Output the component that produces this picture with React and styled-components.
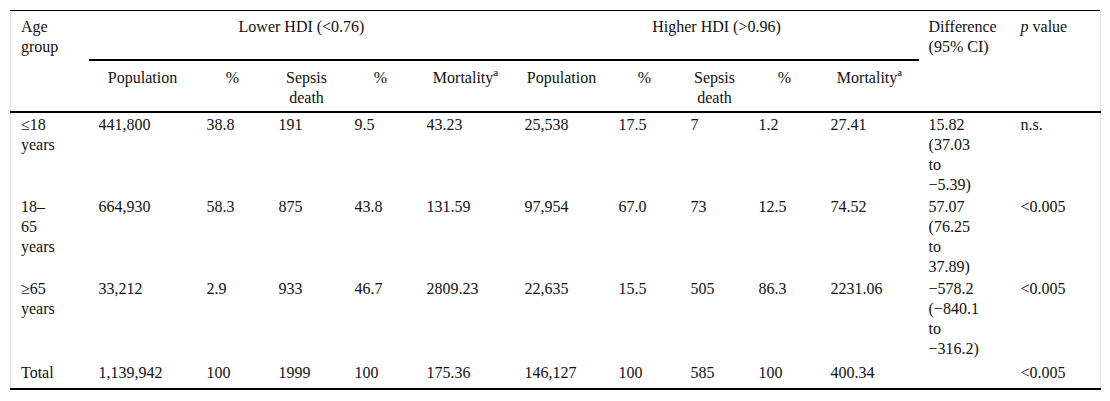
import React from 'react'
import styled, { createGlobalStyle } from 'styled-components'

const GlobalStyle = createGlobalStyle`
    html, body {
        margin: 0;
        padding: 0;
        background: #fff;
    }
    body {
        font-family: "Liberation Serif", "Times New Roman", serif;
        font-size: 16px;
        color: #111;
    }
`

const Page = styled.div`
    padding: 10px;
`

const Table = styled.table`
    width: 1090px;
    table-layout: fixed;
    border-collapse: collapse;
    border-top: 1px solid #000;
    border-bottom: 2px solid #000;
    border-left: 1px solid #e2e2e2;
    border-right: 1px solid #e2e2e2;
    font-family: "Liberation Serif", "Times New Roman", serif;
    font-size: 16px;
    line-height: 20px;
    color: #111;

    thead {
        border-bottom: 2px solid #000;
    }
    tbody tr:last-child td {
        padding-top: 4px;
        padding-bottom: 5px;
    }
`

const HeadRow = styled.tr`
    height: ${p => p.$height}px;
`

const Head = styled.th`
    font-weight: 400;
    vertical-align: top;
    text-align: ${p => p.$align || 'center'};
    padding: ${p => p.$pad || '6px 10px 2px'};
    border-bottom: ${p => (p.$rule ? '2px solid #000' : 'none')};
`

const Cell = styled.td`
    vertical-align: top;
    text-align: left;
    padding: 2px 10px 0;
`

const Sup = styled.sup`
    font-size: 11px;
    line-height: 0;
    vertical-align: 7px;
`

const Italic = styled.i`
    font-style: italic;
`

const widths = [78, 108, 72, 76, 72, 98, 94, 72, 68, 72, 98, 92, 90]

const rows = [
    [['≤18', 'years'], '441,800', '38.8', '191', '9.5', '43.23', '25,538', '17.5', '7', '1.2', '27.41', ['15.82', '(37.03', 'to', '−5.39)'], 'n.s.'],
    [['18–', '65', 'years'], '664,930', '58.3', '875', '43.8', '131.59', '97,954', '67.0', '73', '12.5', '74.52', ['57.07', '(76.25', 'to', '37.89)'], '<0.005'],
    [['≥65', 'years'], '33,212', '2.9', '933', '46.7', '2809.23', '22,635', '15.5', '505', '86.3', '2231.06', ['−578.2', '(−840.1', 'to', '−316.2)'], '<0.005'],
    ['Total', '1,139,942', '100', '1999', '100', '175.36', '146,127', '100', '585', '100', '400.34', '', '<0.005'],
]

function Lines({ value }) {
    if (!Array.isArray(value)) return value
    return value.map((line, i) => (
        <React.Fragment key={i}>
            {i > 0 && <br />}
            {line}
        </React.Fragment>
    ))
}

function GroupColumns() {
    return (
        <>
            <Head $pad="7px 10px 3px">Population</Head>
            <Head $pad="7px 10px 3px">%</Head>
            <Head $pad="7px 10px 3px">Sepsis<br />death</Head>
            <Head $pad="7px 10px 3px">%</Head>
            <Head $pad="7px 10px 3px">Mortality<Sup>a</Sup></Head>
        </>
    )
}

export default function App() {
    return (
        <Page>
            <GlobalStyle />
            <Table>
                <colgroup>
                    {widths.map((w, i) => <col key={i} style={{ width: w }} />)}
                </colgroup>
                <thead>
                    <HeadRow $height={49}>
                        <Head rowSpan={2} $align="left">Age<br />group</Head>
                        <Head colSpan={5} $rule>Lower HDI (&lt;0.76)</Head>
                        <Head colSpan={5} $rule>Higher HDI (&gt;0.96)</Head>
                        <Head rowSpan={2} $align="left">Difference<br />(95% CI)</Head>
                        <Head rowSpan={2} $align="left"><Italic>p</Italic> value</Head>
                    </HeadRow>
                    <HeadRow $height={51}>
                        <GroupColumns />
                        <GroupColumns />
                    </HeadRow>
                </thead>
                <tbody>
                    {rows.map((row, r) => (
                        <tr key={r}>
                            {row.map((v, c) => (
                                <Cell key={c}><Lines value={v} /></Cell>
                            ))}
                        </tr>
                    ))}
                </tbody>
            </Table>
        </Page>
    )
}
